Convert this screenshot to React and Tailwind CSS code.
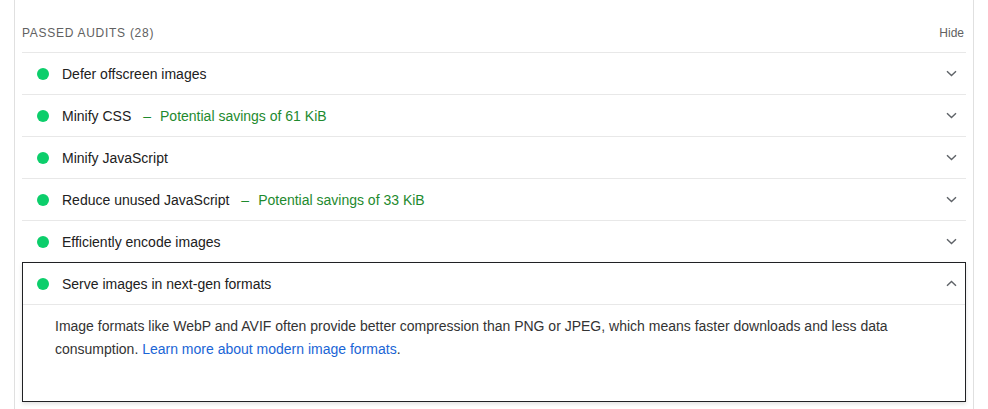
import React from 'react';

const audits = [
  { title: 'Defer offscreen images' },
  { title: 'Minify CSS', savings: 'Potential savings of 61 KiB' },
  { title: 'Minify JavaScript' },
  { title: 'Reduce unused JavaScript', savings: 'Potential savings of 33 KiB' },
  { title: 'Efficiently encode images' },
];

const Chevron = ({ up }) => (
  <svg width="11" height="7" viewBox="0 0 11 7" className={up ? 'rotate-180' : ''}>
    <path d="M1 1.2 L5.5 5.6 L10 1.2" fill="none" stroke="#5f6368" strokeWidth="1.4" />
  </svg>
);

const Dot = () => <span className="w-[12px] h-[12px] rounded-full bg-[#0cce6b] shrink-0" />;

const AuditRow = ({ title, savings }) => (
  <div className="h-[42px] flex items-center border-b border-[#e8e8e8] pl-[15px] pr-[9px]">
    <Dot />
    <span className="ml-[13px] pt-px text-[#212121]">{title}</span>
    {savings && (
      <span className="ml-[12px] pt-px text-[#1e8a2e] flex">
        <span>–</span>
        <span className="ml-[9px]">{savings}</span>
      </span>
    )}
    <span className="ml-auto flex items-center">
      <Chevron />
    </span>
  </div>
);

export default function App() {
  return (
    <div className="w-[988px] h-[409px] bg-white overflow-hidden" style={{ fontFamily: '"Liberation Sans", Arial, sans-serif' }}>
      <div className="ml-[14px] w-[960px] h-full border-l border-r border-[#e0e0e0] px-[7px] text-[14px]">
        <div className="h-[53px] pt-[14px] flex items-center justify-between border-b border-[#e8e8e8]">
          <span className="text-[12px] tracking-[0.06em] text-[#616161]">PASSED AUDITS (28)</span>
          <span className="text-[12px] text-[#616161] mr-[2px]">Hide</span>
        </div>
        {audits.map((a) => (
          <AuditRow key={a.title} {...a} />
        ))}
        <div className="-mt-px border border-[#202124] shadow-[0_2px_4px_rgba(0,0,0,0.12)]">
          <div className="h-[42px] flex items-center border-b border-[#e8e8e8] pl-[14px] pr-[8px]">
            <Dot />
            <span className="ml-[13px] pt-px text-[#212121]">Serve images in next-gen formats</span>
            <span className="ml-auto flex items-center">
              <Chevron up />
            </span>
          </div>
          <div className="pl-[32px] pr-[20px] pt-[10px] pb-[40px] leading-[23px] text-[#333333]">
            Image formats like WebP and AVIF often provide better compression than PNG or JPEG, which means faster downloads and less data consumption.{' '}
            <a className="text-[#1a65d6]">Learn more about modern image formats</a>.
          </div>
        </div>
      </div>
    </div>
  );
}
